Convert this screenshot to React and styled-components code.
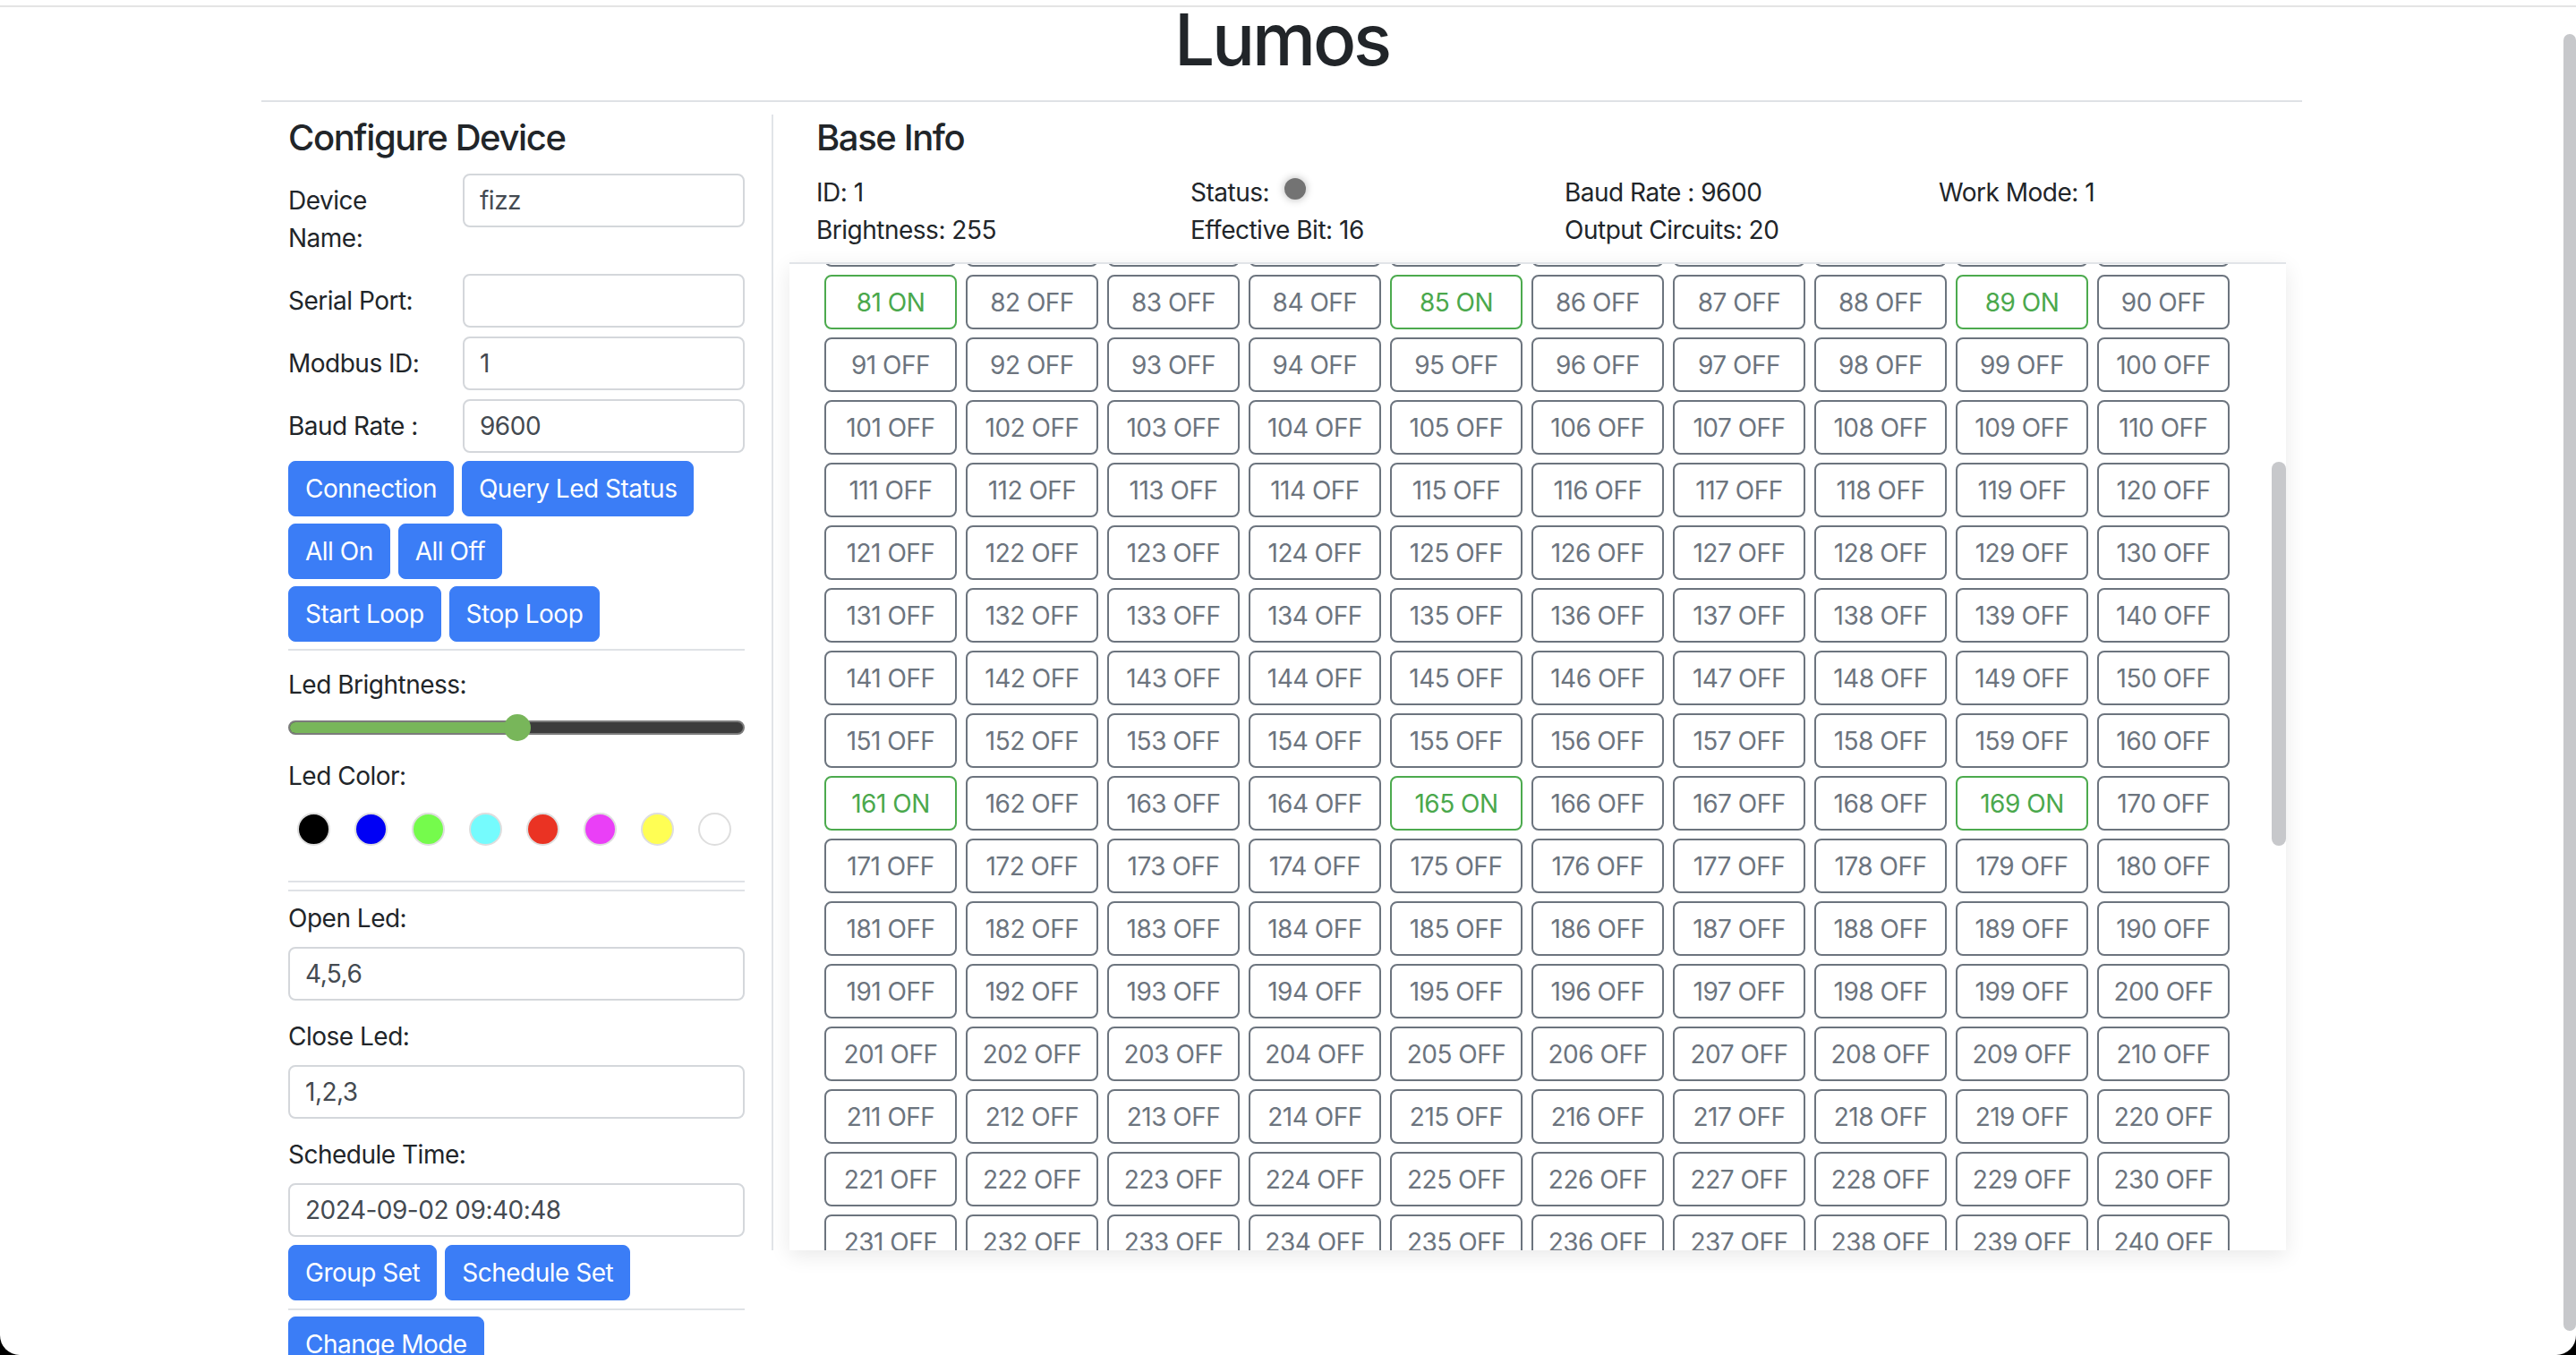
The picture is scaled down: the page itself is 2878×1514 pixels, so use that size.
import React, { useLayoutEffect, useRef, useState } from 'react';
import styled, { createGlobalStyle } from 'styled-components';

const FONT = `Inter, "Liberation Sans", Arial, sans-serif`;
const TRACK = '-0.5px';

const GlobalStyle = createGlobalStyle`
  html, body {
    margin: 0;
    padding: 0;
    background: #fff;
  }
  body {
    font-family: ${FONT};
    font-size: 28px;
    line-height: 42px;
    letter-spacing: ${TRACK};
    color: #212529;
  }
`;

const LED_COUNT = 400;
const COLORS = ['#000000', '#0000f5', '#75fb4c', '#75fbfd', '#ea3323', '#ea3ff7', '#fffe54', '#ffffff'];

function App() {
  const boxRef = useRef(null);
  const [thumb, setThumb] = useState({ top: 0, height: 0 });
  const brightness = 128;

  useLayoutEffect(() => {
    window.scrollTo(0, 38);
    const box = boxRef.current;
    if (box) {
      box.scrollTop = 568;
      const ratio = box.clientHeight / box.scrollHeight;
      setThumb({
        top: box.scrollTop * ratio,
        height: box.clientHeight * ratio,
      });
    }
  }, []);

  const leds = Array.from({ length: LED_COUNT }, (_, i) => i + 1);

  return (
    <>
      <GlobalStyle />
      <TopRule />
      <PageScrollbar />
      <Corners />
      <Page>
        <Container>
          <Title>Lumos</Title>
          <Rule />

          <Main>
            <Sidebar>
              <SectionTitle>Configure Device</SectionTitle>

              <Fields>
                <FieldRow>
                  <RowLabel>Device Name:</RowLabel>
                  <Input defaultValue="fizz" />
                </FieldRow>
                <FieldRow>
                  <RowLabel>Serial Port:</RowLabel>
                  <Input defaultValue="" />
                </FieldRow>
                <FieldRow>
                  <RowLabel>Modbus ID:</RowLabel>
                  <Input defaultValue="1" />
                </FieldRow>
                <FieldRow>
                  <RowLabel>Baud Rate :</RowLabel>
                  <Input defaultValue="9600" />
                </FieldRow>
              </Fields>

              <ButtonRow $mb={8}>
                <Button>Connection</Button>
                <Button>Query Led Status</Button>
              </ButtonRow>
              <ButtonRow $mb={8}>
                <Button>All On</Button>
                <Button>All Off</Button>
              </ButtonRow>
              <ButtonRow $mb={8}>
                <Button>Start Loop</Button>
                <Button>Stop Loop</Button>
              </ButtonRow>

              <Rule $mb={17} />

              <Label>Led Brightness:</Label>
              <Slider>
                <Track>
                  <Fill style={{ width: `${(brightness / 255) * 100}%` }} />
                </Track>
                <Thumb style={{ left: `${(brightness / 255) * 100}%` }} />
              </Slider>

              <Label>Led Color:</Label>
              <Swatches>
                {COLORS.map((c) => (
                  <Swatch key={c} $color={c} />
                ))}
              </Swatches>

              <Rule $mb={8} />
              <Rule $mb={9} />

              <Group $mb={19}>
                <Label>Open Led:</Label>
                <Input defaultValue="4,5,6" />
              </Group>
              <Group $mb={19}>
                <Label>Close Led:</Label>
                <Input defaultValue="1,2,3" />
              </Group>
              <Group $mb={9}>
                <Label>Schedule Time:</Label>
                <Input defaultValue="2024-09-02 09:40:48" />
              </Group>

              <ButtonRow $mb={9}>
                <Button>Group Set</Button>
                <Button>Schedule Set</Button>
              </ButtonRow>
              <Rule $mb={7} />
              <ButtonRow>
                <Button>Change Mode</Button>
              </ButtonRow>
            </Sidebar>

            <Panel>
              <PanelHead>
                <SectionTitle>Base Info</SectionTitle>
                <InfoGrid>
                  <span>ID: 1</span>
                  <span>
                    Status: <StatusDot />
                  </span>
                  <span>Baud Rate : 9600</span>
                  <span>Work Mode: 1</span>
                  <span>Brightness: 255</span>
                  <span>Effective Bit: 16</span>
                  <span>Output Circuits: 20</span>
                  <span />
                </InfoGrid>
              </PanelHead>

              <LedFrame>
                <LedBox ref={boxRef}>
                  <LedGrid>
                    {leds.map((n) => {
                      const on = [1, 5, 9].includes(n % 80);
                      return (
                        <LedButton key={n} $on={on}>
                          {n} {on ? 'ON' : 'OFF'}
                        </LedButton>
                      );
                    })}
                  </LedGrid>
                </LedBox>
                <BoxThumb style={{ top: thumb.top + 2, height: thumb.height }} />
              </LedFrame>
            </Panel>
          </Main>
        </Container>
      </Page>
    </>
  );
}

export default App;

const TopRule = styled.div`
  position: fixed;
  top: 6px;
  left: 0;
  right: 0;
  height: 2px;
  background: #e4e4e4;
  z-index: 5;
`;

const PageScrollbar = styled.div`
  position: fixed;
  top: 38px;
  right: 0;
  width: 14px;
  height: 1449px;
  border-radius: 7px;
  background: #c7c8cb;
  z-index: 5;
`;

const Corners = styled.div`
  position: fixed;
  inset: 0;
  border-radius: 0 0 22px 22px;
  box-shadow: 0 0 0 60px #000;
  pointer-events: none;
  z-index: 6;
`;

const Page = styled.div`
  padding-right: 14px;
`;

const Container = styled.div`
  width: 2280px;
  margin: 0 auto;
  padding-bottom: 10px;
`;

const Title = styled.h1`
  margin: 34px 0 20px;
  font-size: 80px;
  line-height: 96px;
  font-weight: 500;
  letter-spacing: -0.04em;
  text-align: center;
`;

const Rule = styled.div`
  height: 2px;
  background: #dfe2e6;
  margin-bottom: ${(p) => p.$mb || 0}px;
`;

const Main = styled.div`
  display: flex;
  align-items: flex-start;
  margin-top: 14px;
  padding-left: 30px;
`;

const Sidebar = styled.div`
  width: 510px;
  flex: none;
  display: flex;
  flex-direction: column;
  padding-top: 2px;
  margin-right: 30px;
`;

const SectionTitle = styled.h5`
  margin: 0 0 16px;
  font-size: 40px;
  line-height: 48px;
  font-weight: 500;
  letter-spacing: -0.035em;
`;

const Fields = styled.div`
  display: flex;
  flex-direction: column;
  gap: 10px;
  margin-bottom: 9px;
`;

const FieldRow = styled.div`
  display: flex;
  align-items: flex-start;
`;

const RowLabel = styled.label`
  width: 195px;
  flex: none;
  box-sizing: border-box;
  padding: 9px 30px 9px 0;
`;

const Label = styled.label`
  display: block;
`;

const Input = styled.input`
  box-sizing: border-box;
  width: 100%;
  min-width: 0;
  height: 60px;
  padding: 0 17px;
  border: 2px solid #d4d7db;
  border-radius: 8px;
  font-family: ${FONT};
  font-size: 28px;
  letter-spacing: ${TRACK};
  color: #444a51;
  background: #fff;
  outline: none;
`;

const Group = styled.div`
  display: flex;
  flex-direction: column;
  gap: 11px;
  margin-bottom: ${(p) => p.$mb || 0}px;
`;

const ButtonRow = styled.div`
  display: flex;
  gap: 9px;
  margin-bottom: ${(p) => p.$mb || 0}px;
`;

const Button = styled.button`
  height: 62px;
  padding: 0 18px;
  border: 1px solid #3b7df6;
  border-radius: 8px;
  background: #3b7df6;
  color: #fff;
  font-family: ${FONT};
  font-size: 28px;
  line-height: 42px;
  letter-spacing: ${TRACK};
  white-space: nowrap;
`;

const Slider = styled.div`
  position: relative;
  height: 30px;
  margin: 12px 0 18px;
  display: flex;
  align-items: center;
`;

const Track = styled.div`
  width: 100%;
  height: 16px;
  box-sizing: border-box;
  border: 2px solid #7b7b7b;
  border-radius: 8px;
  background: #3c3c3c;
  overflow: hidden;
`;

const Fill = styled.div`
  height: 100%;
  background: #78b65a;
`;

const Thumb = styled.div`
  position: absolute;
  top: 0;
  width: 30px;
  height: 30px;
  margin-left: -15px;
  border-radius: 50%;
  background: #78b65a;
`;

const Swatches = styled.div`
  display: flex;
  gap: 27px;
  padding-left: 10px;
  margin: 20px 0 39px;
`;

const Swatch = styled.span`
  width: 37px;
  height: 37px;
  box-sizing: border-box;
  border-radius: 50%;
  border: 2px solid #dedede;
  background: ${(p) => p.$color};
`;

const Panel = styled.div`
  width: 1672px;
  flex: none;
  border-left: 2px solid #e1e4e8;
  padding: 2px 0 0 18px;
`;

const PanelHead = styled.div`
  padding-left: 30px;
  margin-bottom: 15px;
`;

const InfoGrid = styled.div`
  display: grid;
  grid-template-columns: repeat(4, 418px);
`;

const StatusDot = styled.span`
  display: inline-block;
  width: 24px;
  height: 24px;
  margin-left: 10px;
  border-radius: 50%;
  background: #737373;
  box-shadow: 0 0 10px rgba(0, 0, 0, 0.3);
  vertical-align: 2px;
`;

const LedFrame = styled.div`
  position: relative;
  box-shadow: 0 6px 22px rgba(0, 0, 0, 0.09);
`;

const LedBox = styled.div`
  height: 1104px;
  box-sizing: border-box;
  border-top: 2px solid #e1e4e8;
  overflow-y: auto;
  background: #fff;
  scrollbar-width: none;
`;

const BoxThumb = styled.div`
  position: absolute;
  right: 0;
  width: 16px;
  border-radius: 8px;
  background: #c7c8cb;
`;

const LedGrid = styled.div`
  display: grid;
  grid-template-columns: repeat(10, 148px);
  grid-auto-rows: 61px;
  column-gap: 10px;
  row-gap: 9px;
  padding: 20px 0 20px 39px;
`;

const LedButton = styled.button`
  box-sizing: border-box;
  border: 2px solid ${(p) => (p.$on ? '#4caa4e' : '#6c747e')};
  border-radius: 8px;
  background: #fff;
  color: ${(p) => (p.$on ? '#4aa84c' : '#6c747e')};
  font-family: ${FONT};
  font-size: 28px;
  letter-spacing: ${TRACK};
  padding: 0;
`;
